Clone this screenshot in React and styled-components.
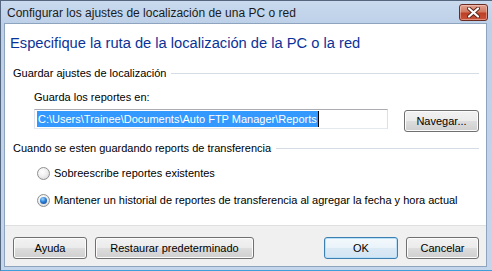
import React, { useState } from "react";
import styled, { createGlobalStyle } from "styled-components";

const GlobalStyle = createGlobalStyle`
  html, body {
    margin: 0;
    padding: 0;
    background: #ffffff;
  }
  body {
    font-family: "Liberation Sans", Arial, sans-serif;
    font-size: 11px;
    color: #000000;
  }
`;

const App = () => {
  const [mode, setMode] = useState("history");
  return (
    <Window>
      <GlobalStyle />
      <TitleBar>
        <TitleText>Configurar los ajustes de localización de una PC o red</TitleText>
        <CloseButton aria-label="Cerrar">
          <svg width="13" height="11" viewBox="0 0 13 11">
            <path
              d="M2 1.5 L11 9.5 M11 1.5 L2 9.5"
              stroke="#5a2418"
              strokeWidth="4"
              strokeLinecap="round"
            />
            <path
              d="M2 1.5 L11 9.5 M11 1.5 L2 9.5"
              stroke="#ffffff"
              strokeWidth="2.2"
              strokeLinecap="round"
            />
          </svg>
        </CloseButton>
      </TitleBar>
      <Client>
        <Body>
          <Heading>Especifique la ruta de la localización de la PC o la red</Heading>

          <GroupHeader $top={14}>
            <span>Guardar ajustes de localización</span>
            <GroupLine />
          </GroupHeader>
          <FieldLabel>Guarda los reportes en:</FieldLabel>
          <PathRow>
            <PathInput>
              <Selected>C:\Users\Trainee\Documents\Auto FTP Manager\Reports</Selected>
              <Caret />
            </PathInput>
            <Button $width={75} $offset={1}>Navegar...</Button>
          </PathRow>

          <GroupHeader $top={9}>
            <span>Cuando se esten guardando reports de transferencia</span>
            <GroupLine />
          </GroupHeader>
          <RadioRow $top={10} onClick={() => setMode("overwrite")}>
            <Radio $checked={mode === "overwrite"} />
            <span>Sobreescribe reportes existentes</span>
          </RadioRow>
          <RadioRow $top={11} onClick={() => setMode("history")}>
            <Radio $checked={mode === "history"} />
            <span>
              Mantener un historial de reportes de transferencia al agregar la fecha y hora actual
            </span>
          </RadioRow>
        </Body>
        <Footer>
          <ButtonGroup>
            <Button $width={74}>Ayuda</Button>
            <Button $width={159}>Restaurar predeterminado</Button>
          </ButtonGroup>
          <ButtonGroup>
            <Button $width={74} $default>OK</Button>
            <Button $width={73}>Cancelar</Button>
          </ButtonGroup>
        </Footer>
      </Client>
    </Window>
  );
};

const Window = styled.div`
  box-sizing: border-box;
  width: 492px;
  height: 271px;
  display: flex;
  flex-direction: column;
  background: linear-gradient(to bottom, #c9daee 0px, #bcd0e8 23px, #c4d6ec 100%);
  border-left: 1px solid #55677e;
  border-top: 1px solid #55677e;
  border-bottom: 1px solid #3f9ed8;
  overflow: hidden;
`;

const TitleBar = styled.div`
  height: 22px;
  flex: none;
  display: flex;
  align-items: flex-start;
  justify-content: space-between;
  padding: 0 4px 0 6px;
`;

const TitleText = styled.div`
  font-family: "Liberation Sans", Arial, sans-serif;
  font-size: 12px;
  line-height: 15px;
  margin-top: 5px;
  color: #1b1b1b;
  white-space: nowrap;
`;

const CloseButton = styled.button`
  box-sizing: border-box;
  width: 29px;
  height: 17px;
  margin-top: 3px;
  padding: 0;
  display: flex;
  align-items: center;
  justify-content: center;
  border: 1px solid #6a2c20;
  border-radius: 3px;
  background: linear-gradient(to bottom, #e3a291 0%, #d17a62 45%, #bd3f25 55%, #c9533a 100%);
  box-shadow: inset 0 0 0 1px rgba(255, 220, 210, 0.45);
`;

const Client = styled.div`
  flex: 1;
  display: flex;
  flex-direction: column;
  margin: 0 5px 3px 3px;
  background: #ffffff;
  border: 1px solid #8ea3bd;
`;

const Body = styled.div`
  flex: 1;
  display: flex;
  flex-direction: column;
  padding: 10px 7px 0 8px;
`;

const Heading = styled.div`
  font-size: 14.7px;
  line-height: 18px;
  color: #0a3399;
  margin-left: -3px;
  white-space: nowrap;
`;

const GroupHeader = styled.div`
  display: flex;
  align-items: center;
  gap: 5px;
  line-height: 14px;
  margin-top: ${(p) => p.$top}px;
  white-space: nowrap;
`;

const GroupLine = styled.div`
  flex: 1;
  height: 1px;
  background: #d5dce3;
  margin-top: 1px;
`;

const FieldLabel = styled.div`
  margin: 10px 0 0 21px;
  line-height: 14px;
`;

const PathRow = styled.div`
  display: flex;
  align-items: flex-start;
  justify-content: space-between;
  margin: 5px 0 0 21px;
`;

const PathInput = styled.div`
  box-sizing: border-box;
  width: 354px;
  height: 20px;
  display: flex;
  align-items: center;
  padding-left: 2px;
  border: 1px solid #abadb3;
  border-color: #abadb3 #dbdfe6 #e3e9ef #e2e3ea;
  background: #ffffff;
  white-space: nowrap;
  overflow: hidden;
`;

const Selected = styled.span`
  background: #3399ff;
  color: #ffffff;
  line-height: 16px;
  padding: 0 1px;
`;

const Caret = styled.span`
  width: 1px;
  height: 16px;
  background: #000000;
`;

const Button = styled.button`
  box-sizing: border-box;
  width: ${(p) => p.$width}px;
  height: 22px;
  margin-top: ${(p) => p.$offset || 0}px;
  padding: 0;
  font-family: "Liberation Sans", Arial, sans-serif;
  font-size: 11px;
  color: #000000;
  border: 1px solid ${(p) => (p.$default ? "#3c7fb1" : "#707070")};
  border-radius: 3px;
  background: ${(p) =>
    p.$default
      ? "linear-gradient(to bottom, #f4f9fc 0%, #e9f3fa 50%, #dbeaf5 51%, #d3e5f3 100%)"
      : "linear-gradient(to bottom, #f2f2f2 0%, #ebebeb 50%, #dddddd 51%, #cfcfcf 100%)"};
  box-shadow: inset 0 0 0 1px ${(p) => (p.$default ? "#b9e0f7" : "#fcfcfc")};
`;

const RadioRow = styled.div`
  display: flex;
  align-items: center;
  gap: 4px;
  margin: ${(p) => p.$top}px 0 0 24px;
  line-height: 16px;
  white-space: nowrap;
  cursor: default;
`;

const Radio = styled.span`
  box-sizing: border-box;
  width: 13px;
  height: 13px;
  flex: none;
  border-radius: 50%;
  border: 1px solid #8e8f8f;
  background: radial-gradient(circle at 40% 35%, #ffffff 0%, #f0f0f0 45%, #cfcfcf 100%);
  display: flex;
  align-items: center;
  justify-content: center;

  &::after {
    content: "";
    display: ${(p) => (p.$checked ? "block" : "none")};
    width: 7px;
    height: 7px;
    border-radius: 50%;
    background: radial-gradient(circle at 40% 30%, #9ad7ff 0%, #2c7fd6 45%, #0d3d8a 100%);
  }
`;

const Footer = styled.div`
  height: 41px;
  flex: none;
  display: flex;
  justify-content: space-between;
  padding: 11px 7px 0 8px;
  box-sizing: border-box;
  background: #f0f0f0;
  border-top: 1px solid #dfdfdf;
`;

const ButtonGroup = styled.div`
  display: flex;
  gap: 8px;
`;

export default App;
